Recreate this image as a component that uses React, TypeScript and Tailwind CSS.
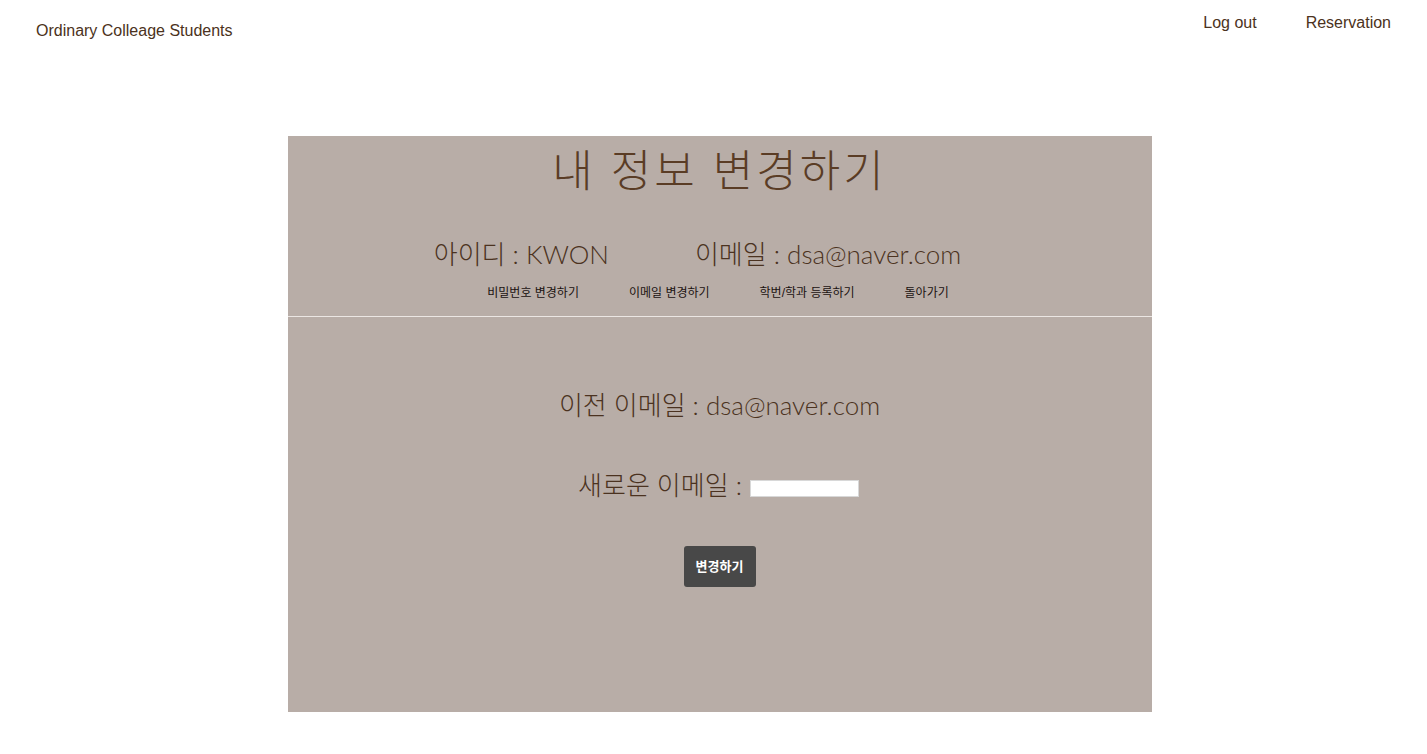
export default function App() {
  const font = { fontFamily: '"Liberation Sans", "Noto Sans CJK KR", sans-serif' };
  const light = { fontFamily: 'Lato, "Noto Sans CJK KR", sans-serif' };
  return (
    <div className="min-h-[754px] bg-white text-[#4b3220]" style={font}>
      <header className="flex justify-between items-start">
        <div className="pl-[36px] pt-[21px] text-[16px] leading-[20px]">Ordinary Colleage Students</div>
        <nav className="flex gap-[49px] pr-[36px] pt-[13px] text-[16px] leading-[20px]">
          <span>Log out</span>
          <span>Reservation</span>
        </nav>
      </header>
      <main className="flex justify-center pt-[95px] pl-[12px]">
        <section className="w-[864px] h-[576px] bg-[#b8ada7] flex flex-col">
          <div className="flex flex-col items-center">
            <h1 className="text-[44px] leading-[64px] font-light tracking-[3px] text-[#5a3c25] mt-[2px]" style={light}>내 정보 변경하기</h1>
            <div className="flex gap-[86px] mt-[36px] mr-[44px] text-[26px] leading-[32px] font-light text-[#4b3220]" style={light}>
              <span>아이디 : KWON</span>
              <span>이메일 : dsa@naver.com</span>
            </div>
            <div className="flex gap-[50px] mt-[15px] mr-[3px] text-[12px] leading-[16px] text-[#1a1210]">
              <span>비밀번호 변경하기</span>
              <span>이메일 변경하기</span>
              <span>학번/학과 등록하기</span>
              <span>돌아가기</span>
            </div>
          </div>
          <div className="h-px bg-[#ebe6e3] mt-[15px]"></div>
          <div className="flex flex-col items-center">
            <p className="mt-[72px] text-[26px] leading-[32px] font-light text-[#4b3220]" style={light}>이전 이메일 : dsa@naver.com</p>
            <div className="mt-[48px] flex items-center gap-[8px] text-[26px] leading-[32px] font-light text-[#4b3220] ml-[-2px]" style={light}>
              <span>새로운 이메일 :</span>
              <input className="w-[109px] h-[17px] bg-white border border-[#d8d8d8] outline-none mt-[6px]" />
            </div>
            <button className="mt-[45px] w-[72px] h-[41px] bg-[#484848] rounded-[3px] text-white font-bold text-[13px]">변경하기</button>
          </div>
        </section>
      </main>
    </div>
  );
}
